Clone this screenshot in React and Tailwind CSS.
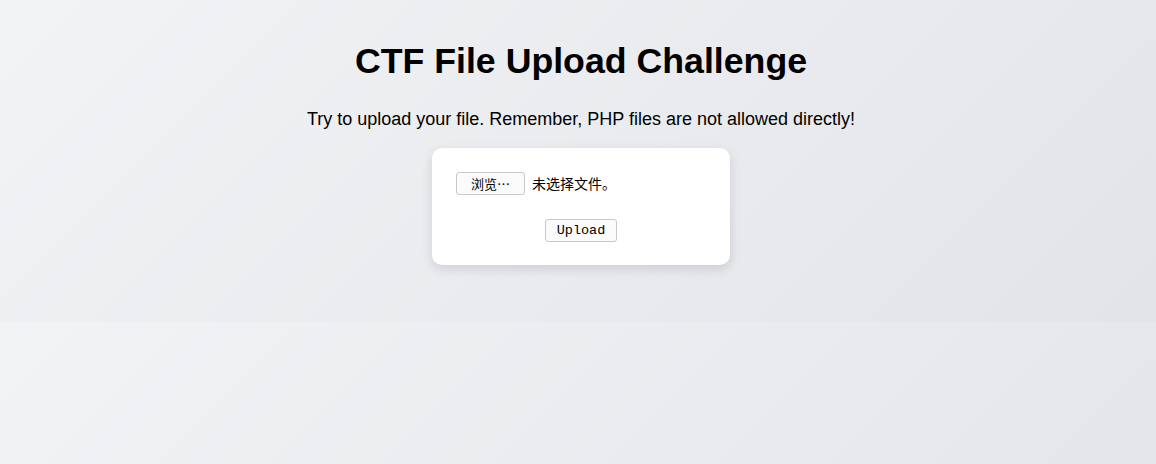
import React from 'react';

const cjk = "font-['Noto_Sans_CJK_SC',sans-serif]";

export default function App() {
  return (
    <div className="min-h-[464px] bg-[linear-gradient(135deg,#f2f3f5,#e3e4e8)] bg-[length:100%_322px] bg-repeat font-['Liberation_Sans',Arial,sans-serif] text-black">
      <div className="flex flex-col items-center pt-[41px] pl-[6px]">
        <h1 className="text-[35.7px] leading-[41px] font-bold">CTF File Upload Challenge</h1>
        <p className="mt-[27px] text-[18px] leading-[21px]">
          Try to upload your file. Remember, PHP files are not allowed directly!
        </p>

        <form
          className="mt-[18px] w-[298px] rounded-[10px] bg-white px-6 pt-6 pb-[23px] shadow-[0_4px_12px_rgba(0,0,0,0.12)]"
          onSubmit={(e) => e.preventDefault()}
        >
          <div className="flex items-center gap-[7px]">
            <button
              type="button"
              className={`h-[23px] w-[69px] rounded-[3px] border border-[#c9c9c9] bg-[#fbfbfb] text-[13px] leading-none ${cjk}`}
            >
              浏览…
            </button>
            <span className={`text-[14px] ${cjk}`}>未选择文件。</span>
          </div>
          <div className="mt-6 flex justify-center">
            <button
              type="submit"
              className="h-[23px] w-[72px] rounded-[3px] border border-[#c9c9c9] bg-[#fbfbfb] font-['Liberation_Mono',monospace] text-[13.5px] leading-none"
            >
              Upload
            </button>
          </div>
        </form>
      </div>
    </div>
  );
}
